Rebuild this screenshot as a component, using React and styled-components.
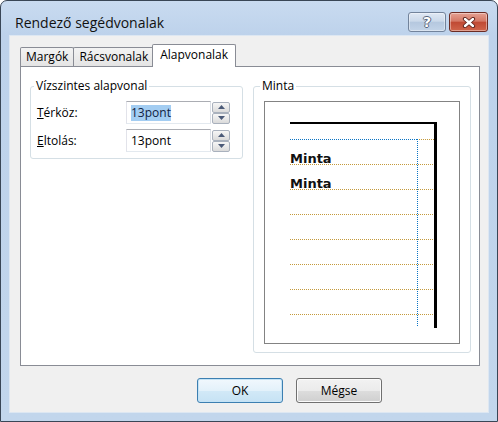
import React from 'react';
import styled, { createGlobalStyle } from 'styled-components';

const GlobalStyle = createGlobalStyle`
  html, body {
    margin: 0;
    padding: 0;
    background: #ffffff;
  }
  body {
    width: 498px;
    height: 422px;
    overflow: hidden;
    font-family: "Open Sans", "Noto Sans", sans-serif;
    font-size: 12px;
    color: #000000;
  }
  * {
    box-sizing: border-box;
  }
`;

const Window = styled.div`
  width: 498px;
  height: 422px;
  display: flex;
  flex-direction: column;
  padding: 0 8px 8px 8px;
  border: 1px solid #394656;
  border-radius: 7px 7px 0 0;
  background: linear-gradient(to bottom, #c9dbf0 0px, #bdd2eb 34px, #c2d6ec 100%);
`;

const TitleBar = styled.div`
  height: 34px;
  display: flex;
  align-items: flex-start;
  padding: 11px 1px 0 6px;
`;

const Title = styled.div`
  flex: 1;
  margin-top: 1px;
  font-size: 14px;
  line-height: 20px;
  color: #111111;
`;

const CaptionButton = styled.div`
  width: ${p => (p.$close ? 39 : 38)}px;
  height: 20px;
  margin-left: ${p => (p.$close ? 3 : 0)}px;
  display: flex;
  align-items: center;
  justify-content: center;
  border: 1px solid ${p => (p.$close ? '#6b2c24' : '#72839b')};
  border-radius: 3px;
  background: ${p =>
    p.$close
      ? 'linear-gradient(to bottom, #e5a193 0%, #d47966 45%, #c04a34 52%, #d0654b 100%)'
      : 'linear-gradient(to bottom, #dfe8f4 0%, #cbd9ea 45%, #b5c8df 52%, #c3d4e8 100%)'};
  box-shadow: inset 0 0 0 1px rgba(255, 255, 255, 0.4);
`;

const HelpGlyph = styled.span`
  font-family: "DejaVu Sans", sans-serif;
  font-weight: bold;
  font-size: 14px;
  line-height: 14px;
  color: #ffffff;
  text-shadow: -1px 0 #56657c, 1px 0 #56657c, 0 -1px #56657c, 0 1px #56657c;
`;

const Client = styled.div`
  flex: 1;
  display: flex;
  flex-direction: column;
  padding: 8px 0 0 10px;
  background: #f0f0f0;
  border: 1px solid #dde7f2;
`;

const TabRow = styled.div`
  height: 22px;
  display: flex;
  align-items: flex-end;
`;

const Tab = styled.div`
  position: relative;
  height: ${p => (p.$active ? 23 : 19)}px;
  margin-left: ${p => (p.$active ? -2 : p.$first ? 0 : -1)}px;
  margin-bottom: ${p => (p.$active ? -1 : 0)}px;
  padding: 0 ${p => (p.$active ? 7 : 5)}px;
  border: 1px solid #898c95;
  border-bottom: none;
  border-radius: 2px 2px 0 0;
  background: ${p => (p.$active ? '#ffffff' : 'linear-gradient(to bottom, #f3f3f3, #e4e4e4)')};
  z-index: ${p => (p.$active ? 2 : 1)};
  line-height: ${p => (p.$active ? 20 : 17)}px;
  white-space: nowrap;
`;

const Panel = styled.div`
  width: 460px;
  height: 300px;
  display: flex;
  align-items: flex-start;
  gap: 10px;
  padding: 11px 8px 0 9px;
  border: 1px solid #898c95;
  background: #ffffff;
`;

const Group = styled.fieldset`
  margin: 0;
  padding: 0;
  width: ${p => p.$width}px;
  height: ${p => p.$height}px;
  border: 1px solid #d5dfe5;
  border-radius: 3px;
`;

const Legend = styled.legend`
  margin-left: ${p => p.$indent}px;
  padding: 0 2px;
  line-height: 16px;
  color: #000000;
`;

const Fields = styled.div`
  display: flex;
  flex-direction: column;
  gap: 5px;
  padding: 7px 0 0 6px;
`;

const FieldRow = styled.div`
  display: grid;
  grid-template-columns: 89px 85px 19px;
  align-items: center;
`;

const Label = styled.label`
  line-height: 16px;
`;

const TextBox = styled.div`
  height: 23px;
  display: flex;
  align-items: center;
  padding-left: 4px;
  border: 1px solid #abadb3;
  border-color: #abadb3 #dbdfe6 #e3e9ef #e2e3ea;
  background: #ffffff;
  line-height: 16px;
`;

const Selected = styled.span`
  background: ${p => (p.$on ? '#a3cdf2' : 'transparent')};
  color: ${p => (p.$on ? '#10213f' : '#000000')};
`;

const Spinner = styled.div`
  height: 23px;
  display: flex;
  flex-direction: column;
  justify-content: center;
  padding-left: 1px;
`;

const SpinButton = styled.div`
  height: 11px;
  display: flex;
  align-items: center;
  justify-content: center;
  border: 1px solid #a9b1bd;
  border-radius: 2px;
  background: linear-gradient(to bottom, #f6f6f6 0%, #e9e9e9 50%, #dadada 100%);
`;

const Preview = styled.div`
  width: 196px;
  height: 243px;
  margin: 7px 0 0 10px;
  border: 1px solid #838383;
  background: #ffffff;
`;

const PreviewText = styled.text`
  font-family: "DejaVu Sans", sans-serif;
  font-weight: bold;
  font-size: 13px;
  fill: #111111;
`;

const ButtonRow = styled.div`
  display: flex;
  gap: 13px;
  margin-top: 12px;
  padding-left: 177px;
`;

const Button = styled.div`
  width: 86px;
  height: 25px;
  display: flex;
  align-items: center;
  justify-content: center;
  border: 1px solid ${p => (p.$default ? '#3c7fb1' : '#707070')};
  border-radius: 3px;
  background: ${p =>
    p.$default
      ? 'linear-gradient(to bottom, #f1f8fd 0%, #e3f1fa 50%, #d2e9f7 51%, #c6e2f4 100%)'
      : 'linear-gradient(to bottom, #f2f2f2 0%, #ebebeb 50%, #dddddd 51%, #cfcfcf 100%)'};
  box-shadow: inset 0 0 0 1px ${p => (p.$default ? '#c4e3f6' : '#fbfbfb')};
  line-height: 16px;
`;

const Arrow = ({ down }) => (
  <svg width="7" height="4" viewBox="0 0 7 4">
    <polygon points={down ? '0,0 7,0 3.5,4' : '0,4 7,4 3.5,0'} fill="#4b5a78" />
  </svg>
);

const CloseIcon = () => (
  <svg width="14" height="11" viewBox="0 0 14 11">
    <path d="M3 2 L11 9 M11 2 L3 9" stroke="#5a211a" strokeWidth="4.2" strokeLinecap="round" />
    <path d="M3 2 L11 9 M11 2 L3 9" stroke="#ffffff" strokeWidth="2.4" strokeLinecap="round" />
  </svg>
);

const fields = [
  { key: 'T', rest: 'érköz:', value: '13pont', selected: true },
  { key: 'E', rest: 'ltolás:', value: '13pont', selected: false },
];

const baselineRows = [62, 87, 112, 137, 162, 187, 212];

const BaselinePreview = () => (
  <svg width="194" height="241" viewBox="0 0 194 241" shapeRendering="crispEdges">
    <g stroke="#c49a3c" strokeWidth="1" strokeDasharray="1 1">
      <line x1="152" y1="37.5" x2="169" y2="37.5" />
      {baselineRows.map(y => (
        <line key={y} x1="25" y1={y + 0.5} x2="169" y2={y + 0.5} />
      ))}
    </g>
    <g stroke="#0b74c4" strokeWidth="1" strokeDasharray="1 1">
      <line x1="25" y1="37.5" x2="152" y2="37.5" />
      <line x1="152.5" y1="37" x2="152.5" y2="224" />
    </g>
    <rect x="25" y="20" width="147" height="2" fill="#000000" />
    <rect x="169" y="20" width="3" height="206" fill="#000000" />
    <PreviewText x="25" y="61">Minta</PreviewText>
    <PreviewText x="25" y="86">Minta</PreviewText>
  </svg>
);

const App = () => (
  <>
    <GlobalStyle />
    <Window>
      <TitleBar>
        <Title>Rendező segédvonalak</Title>
        <CaptionButton>
          <HelpGlyph>?</HelpGlyph>
        </CaptionButton>
        <CaptionButton $close>
          <CloseIcon />
        </CaptionButton>
      </TitleBar>
      <Client>
        <TabRow>
          <Tab $first>Margók</Tab>
          <Tab>Rácsvonalak</Tab>
          <Tab $active>Alapvonalak</Tab>
        </TabRow>
        <Panel>
          <Group $width={213} $height={81}>
            <Legend $indent={3}>Vízszintes alapvonal</Legend>
            <Fields>
              {fields.map(f => (
                <FieldRow key={f.key}>
                  <Label>
                    <u>{f.key}</u>
                    {f.rest}
                  </Label>
                  <TextBox>
                    <Selected $on={f.selected}>{f.value}</Selected>
                  </TextBox>
                  <Spinner>
                    <SpinButton>
                      <Arrow />
                    </SpinButton>
                    <SpinButton>
                      <Arrow down />
                    </SpinButton>
                  </Spinner>
                </FieldRow>
              ))}
            </Fields>
          </Group>
          <Group $width={218} $height={275}>
            <Legend $indent={6}>Minta</Legend>
            <Preview>
              <BaselinePreview />
            </Preview>
          </Group>
        </Panel>
        <ButtonRow>
          <Button $default>OK</Button>
          <Button>Mégse</Button>
        </ButtonRow>
      </Client>
    </Window>
  </>
);

export default App;
